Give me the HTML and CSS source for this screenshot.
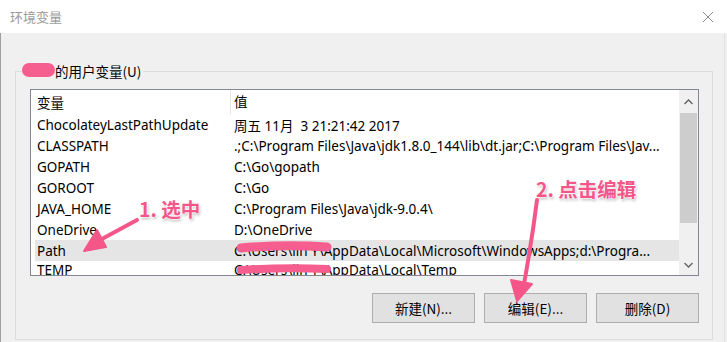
FILE: index.html
```html
<!DOCTYPE html>
<html lang="zh-CN">
<head>
    <meta charset="UTF-8">
    <title>环境变量</title>
    <link rel="stylesheet" href="styles.css">
</head>
<body>
    <div class="window">
        <div class="titlebar">
            <span class="title">环境变量</span>
            <svg class="close" width="12" height="12" viewBox="0 0 12 12">
                <path d="M1 1 L11 11 M11 1 L1 11" stroke="#8a8a8a" stroke-width="1" fill="none"/>
            </svg>
        </div>

        <div class="content">
            <fieldset class="group">
                <legend><span class="blot-space"></span>的用户变量(U)</legend>

                <div class="list">
                    <div class="rows">
                        <div class="row head">
                            <div class="cell name">变量</div>
                            <div class="cell value">值</div>
                        </div>
                        <div class="row">
                            <div class="cell name">ChocolateyLastPathUpdate</div>
                            <div class="cell value">周五 11月&nbsp; 3 21:21:42 2017</div>
                        </div>
                        <div class="row">
                            <div class="cell name">CLASSPATH</div>
                            <div class="cell value">.;C:\Program Files\Java\jdk1.8.0_144\lib\dt.jar;C:\Program Files\Jav...</div>
                        </div>
                        <div class="row">
                            <div class="cell name">GOPATH</div>
                            <div class="cell value">C:\Go\gopath</div>
                        </div>
                        <div class="row">
                            <div class="cell name">GOROOT</div>
                            <div class="cell value">C:\Go</div>
                        </div>
                        <div class="row">
                            <div class="cell name">JAVA_HOME</div>
                            <div class="cell value">C:\Program Files\Java\jdk-9.0.4\</div>
                        </div>
                        <div class="row">
                            <div class="cell name">OneDrive</div>
                            <div class="cell value">D:\OneDrive</div>
                        </div>
                        <div class="row selected">
                            <div class="cell name">Path</div>
                            <div class="cell value">C:\Users\lin Y\AppData\Local\Microsoft\WindowsApps;d:\Progra...</div>
                        </div>
                        <div class="row last">
                            <div class="cell name">TEMP</div>
                            <div class="cell value">C:\Users\lin Y\AppData\Local\Temp</div>
                        </div>
                    </div>
                    <div class="scrollbar">
                        <svg class="arrow" width="17" height="17" viewBox="0 0 17 17">
                            <path d="M4.5 10 L8.5 6 L12.5 10" stroke="#606060" stroke-width="1.3" fill="none"/>
                        </svg>
                        <div class="track"><div class="thumb"></div></div>
                        <svg class="arrow" width="17" height="17" viewBox="0 0 17 17">
                            <path d="M4.5 7 L8.5 11 L12.5 7" stroke="#606060" stroke-width="1.3" fill="none"/>
                        </svg>
                    </div>
                </div>

                <div class="buttons">
                    <button>新建(N)...</button>
                    <button>编辑(E)...</button>
                    <button>删除(D)</button>
                </div>
            </fieldset>
            <div class="edge"></div>
        </div>

        <!-- пометки поверх скриншота -->
        <div class="note note-1">1. 选中</div>
        <div class="note note-2">2. 点击编辑</div>
        <svg class="marks" width="727" height="342" viewBox="0 0 727 342">
            <g stroke="#f65e8f" stroke-linecap="round" fill="none">
                <line x1="29" y1="70" x2="48" y2="70" stroke-width="14"/>
                <path d="M241 248 Q285 244 327 247" stroke-width="9"/>
                <path d="M241 270 Q285 267 327 269" stroke-width="8"/>
            </g>
            <g stroke="#f5568a" stroke-width="4" stroke-linecap="round" fill="none">
                <line x1="137" y1="220" x2="100" y2="240"/>
                <path d="M537 200 Q532 240 524 284"/>
            </g>
            <g fill="#f5568a" stroke="#f5568a" stroke-linejoin="round" stroke-width="2">
                <polygon points="84,251 97,230 106,247"/>
                <polygon points="517,301 511,280 532,284"/>
            </g>
        </svg>
    </div>
</body>
</html>
```

FILE: styles.css
```css
body {
    margin: 0;
    font-family: "Noto Sans", "Noto Sans CJK SC", sans-serif;
    font-size: 13.5px;
    color: #000;
}
.window {
    position: relative;
    width: 727px;
    height: 342px;
    overflow: hidden;
    background-color: #f0f0f0;
}
.titlebar {
    height: 33px;
    background-color: #fff;
    display: flex;
    align-items: center;
    justify-content: space-between;
    padding: 0 13px 0 10px;
}
.title {
    color: #9a9a9a;
    font-family: "Noto Sans CJK SC", sans-serif;
    font-size: 13px;
}
.content {
    height: 309px;
    border-left: 1px solid #a0a0a0;
    padding: 28px 0 0 14px;
    box-sizing: border-box;
    display: flex;
}
.group {
    width: 698px;
    height: 279px;
    flex: none;
    box-sizing: border-box;
    margin: 0;
    padding: 8px 13px 0 14px;
    border: 1px solid #dcdcdc;
}
.edge {
    flex: none;
    width: 10px;
    margin-left: 1px;
    border-right: 1px solid #e2e2e2;
    margin-top: -28px;
}
.group legend {
    padding: 0 2px 0 0;
    margin-left: -8px;
    font-family: "Noto Sans CJK SC", sans-serif;
    font-size: 13.5px;
    display: flex;
    align-items: center;
}
.blot-space {
    display: inline-block;
    width: 33px;
    height: 14px;
}
.list {
    height: 187px;
    border: 1px solid #828790;
    background-color: #fff;
    display: flex;
    box-sizing: border-box;
}
.rows {
    flex: 1;
    overflow: hidden;
    padding-left: 4px;
}
.row {
    display: flex;
    height: 21px;
    align-items: center;
    white-space: nowrap;
}
.row.head {
    height: 24px;
}
.row.last {
    align-items: flex-start;
}
.row.selected {
    background-color: #e5e5e5;
}
.cell {
    padding-left: 2px;
}
.cell.name {
    width: 193px;
}
.head .cell.value {
    border-left: 1px solid #e5e5e5;
    height: 24px;
    line-height: 24px;
    padding-left: 3px;
}
.cell.value {
    padding-left: 4px;
}
.scrollbar {
    width: 19px;
    display: flex;
    flex-direction: column;
    background-color: #f0f0f0;
    align-items: center;
}
.arrow {
    flex: none;
    margin-top: 4px;
}
.scrollbar .arrow:last-child {
    margin: 0 0 2px;
}
.track {
    flex: 1;
    width: 17px;
    padding-top: 2px;
}
.thumb {
    height: 110px;
    background-color: #cdcdcd;
}
.buttons {
    display: flex;
    justify-content: flex-end;
    gap: 9px;
    margin-top: 17px;
}
button {
    width: 103px;
    height: 30px;
    background-color: #e1e1e1;
    border: 1px solid #adadad;
    font-family: "Noto Sans CJK SC", sans-serif;
    font-size: 13.5px;
    color: #000;
    padding: 0;
}
.note {
    position: absolute;
    color: #f5568a;
    font-family: "Noto Sans CJK SC", sans-serif;
    font-weight: bold;
    font-size: 19.5px;
    text-shadow: 0 0 2px #fff, 0 0 2px #fff, 0 0 2px #fff, 1px 2px 3px rgba(0,0,0,0.3);
}
.note-1 {
    left: 139px;
    top: 194px;
}
.note-2 {
    left: 536px;
    top: 174px;
}
.marks {
    position: absolute;
    left: 0;
    top: 0;
    pointer-events: none;
}
```
